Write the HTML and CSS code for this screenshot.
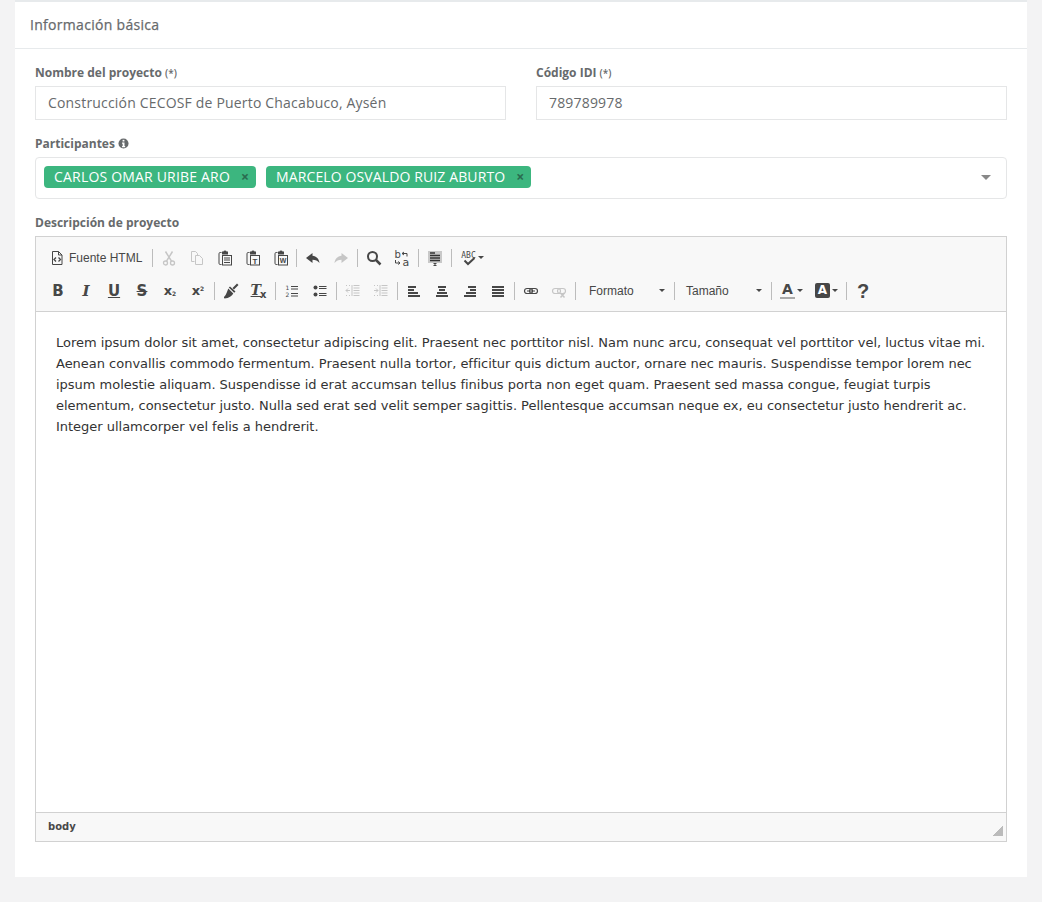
FILE: index.html
```html
<!DOCTYPE html>
<html lang="es">
<head>
<meta charset="utf-8">
<title>Información básica</title>
<link rel="stylesheet" href="styles.css">
</head>
<body>
<svg class="defs" width="0" height="0" aria-hidden="true">
  <symbol id="clip" viewBox="0 0 16 16"><path d="M4.500 2.500H3.200A1.200 1.200 0 0 0 2 3.700v9.600a1.200 1.200 0 0 0 1.200 1.200h1.300" fill="none" stroke="currentColor"/><path d="M5 1.500h1.500a1.500 1 0 0 1 3 0H11v3H5z" fill="currentColor"/><rect x="5.500" y="5.500" width="9" height="9.500" fill="none" stroke="currentColor"/></symbol>
</svg>
<main class="card">
  <h5 class="card-title">Información básica</h5>
  <form class="card-body">
    <div class="row">
      <div class="field">
        <label class="label">Nombre del proyecto <small>(*)</small></label>
        <input class="input" type="text" value="Construcción CECOSF de Puerto Chacabuco, Aysén">
      </div>
      <div class="field">
        <label class="label">Código IDI <small>(*)</small></label>
        <input class="input" type="text" value="789789978">
      </div>
    </div>
    <div class="block">
      <label class="label">Participantes
        <svg class="info" viewBox="0 0 12 12" width="11" height="11"><circle cx="6" cy="6" r="5.500" fill="currentColor"/><rect x="5" y="2" width="2" height="1.800" fill="#fff"/><path d="M4.400 5h2.700v3.600h.7V10H4.400V8.600h.7V6.400h-.7z" fill="#fff"/></svg>
      </label>
      <div class="select">
        <span class="tag">CARLOS OMAR URIBE ARO<span class="tag-x">×</span></span>
        <span class="tag">MARCELO OSVALDO RUIZ ABURTO<span class="tag-x">×</span></span>
        <span class="select-caret"></span>
      </div>
    </div>
    <div class="block">
      <label class="label">Descripción de proyecto</label>
      <div class="editor">
        <div class="toolbar">
          <div class="tb-row">
            <button type="button" class="btn btn-source">
              <svg viewBox="0 0 16 16" width="16" height="16"><path d="M3.500 1.500h6l3.500 3.500v9.500h-9.500z" fill="none" stroke="currentColor"/><path d="M9.500 1.500v3.500H13" fill="none" stroke="currentColor"/><path d="M7 7.500 5 9.500l2 2M9.500 7.500l2 2-2 2" fill="none" stroke="currentColor" stroke-width="1.300"/></svg>
              <span>Fuente HTML</span>
            </button>
            <i class="sep"></i>
            <button type="button" class="btn off"><svg viewBox="0 0 16 16" width="16" height="16"><circle cx="4.500" cy="13" r="2" fill="none" stroke="currentColor" stroke-width="1.300"/><circle cx="11.500" cy="13" r="2" fill="none" stroke="currentColor" stroke-width="1.300"/><path d="M5.500 11.200 11.500 1.500M10.500 11.200 4.500 1.500" stroke="currentColor" stroke-width="1.500"/></svg></button>
            <button type="button" class="btn off"><svg viewBox="0 0 16 16" width="16" height="16"><path d="M2.500 1.500h4l2 2v2M5.500 11.500h-3v-10M6.500 5.500h4l3 3v6h-7z" fill="none" stroke="currentColor"/></svg></button>
            <button type="button" class="btn"><svg viewBox="0 0 16 16" width="16" height="16"><use href="#clip"/><path d="M7 8h6M7 10h6M7 12.500h6" stroke="currentColor"/></svg></button>
            <button type="button" class="btn"><svg viewBox="0 0 16 16" width="16" height="16"><use href="#clip"/><text x="10" y="13.500" class="ic-mini">T</text></svg></button>
            <button type="button" class="btn"><svg viewBox="0 0 16 16" width="16" height="16"><use href="#clip"/><text x="10" y="13" class="ic-mini ic-w">W</text></svg></button>
            <i class="sep sep-tight"></i>
            <button type="button" class="btn"><svg viewBox="0 0 16 16" width="16" height="16"><path d="M7.500 3 1 8l6.500 5V9.800c3 0 5 .7 7 3.200-.4-4-3-7-7-7.300z" fill="currentColor"/></svg></button>
            <button type="button" class="btn off"><svg viewBox="0 0 16 16" width="16" height="16"><path d="M8.500 3 15 8l-6.500 5V9.800c-3 0-5 .7-7 3.200.4-4 3-7 7-7.300z" fill="currentColor"/></svg></button>
            <i class="sep"></i>
            <button type="button" class="btn"><svg viewBox="0 0 16 16" width="16" height="16"><circle cx="6.500" cy="6.500" r="4.500" fill="none" stroke="currentColor" stroke-width="2"/><path d="m10 10 4.500 4.500" stroke="currentColor" stroke-width="2.500"/></svg></button>
            <button type="button" class="btn"><svg viewBox="-1 -2 18 20" width="18" height="20"><text x="0.500" y="8" class="ic-ba">b</text><text x="8.500" y="15.500" class="ic-ba ic-a">a</text><path d="M8 3.500h5v3M8 3.500l2-1.500M8 3.500 10 5M1.500 10v3H6M6 13l-1.800-1.500M6 13l-1.800 1.500" fill="none" stroke="currentColor"/></svg></button>
            <i class="sep"></i>
            <button type="button" class="btn"><svg viewBox="0 0 16 16" width="16" height="16"><rect x="1" y="1" width="14" height="12" fill="#c8c8c8"/><path d="M3 3h5M3 5.500h10M3 8h10M3 10.500h10" stroke="#333" stroke-width="1.500"/><path d="M6.500 13.500h3M6.500 15.500h3M8 13.500v2" stroke="currentColor"/></svg></button>
            <i class="sep"></i>
            <button type="button" class="btn btn-spell"><svg viewBox="0 0 16 16" width="16" height="16"><text x="7.500" y="7.500" class="ic-abc">ABC</text><path d="m3.500 10.500 3.500 3.500L13.500 8" fill="none" stroke="currentColor" stroke-width="2"/></svg><i class="caret"></i></button>
          </div>
          <div class="tb-row">
            <button type="button" class="btn"><span class="ic-b">B</span></button>
            <button type="button" class="btn"><span class="ic-i">I</span></button>
            <button type="button" class="btn"><span class="ic-b ic-u">U</span></button>
            <button type="button" class="btn"><span class="ic-b ic-s">S</span></button>
            <button type="button" class="btn"><span class="ic-x">x<sub>2</sub></span></button>
            <button type="button" class="btn"><span class="ic-x">x<sup>2</sup></span></button>
            <i class="sep"></i>
            <button type="button" class="btn"><svg viewBox="0 0 16 16" width="16" height="16"><path d="M9.500 5 14 .5 15.500 2 11 6.500zM7 3.500l5.500 5-1.300 1.300-5.400-5.200zM5.300 5.600l5 4.800C9 13 6 15 1.500 15.500 1 15 .8 14.500 1 14c2.700-2.500 3-5.500 4.300-8.400z" fill="currentColor"/></svg></button>
            <button type="button" class="btn"><span class="ic-clear">T<b>x</b></span></button>
            <i class="sep"></i>
            <button type="button" class="btn"><svg viewBox="0 0 16 16" width="16" height="16"><text x="3.500" y="7" class="ic-num">1</text><text x="3.500" y="14" class="ic-num">2</text><path d="M7 3.500h7M7 6h7M7 10.500h7M7 13h7" stroke="currentColor"/></svg></button>
            <button type="button" class="btn"><svg viewBox="0 0 16 16" width="16" height="16"><circle cx="3.500" cy="4.500" r="2" fill="currentColor"/><circle cx="3.500" cy="11.500" r="2" fill="currentColor"/><path d="M7 3.500h7.500M7 5.500h7.500M7 10.500h7.500M7 12.500h7.500" stroke="currentColor"/></svg></button>
            <i class="sep"></i>
            <button type="button" class="btn off"><svg viewBox="0 0 16 16" width="16" height="16"><path d="M8.500 2.500h6M8.500 5h6M8.500 7.500h6M8.500 10h6M8.500 12.500h6M7 2v11" stroke="currentColor"/><path d="M5 7.500H1M3 5.500l-2 2 2 2M1 2.500h1M4 2.500h1M1 12.500h1M4 12.500h1" fill="none" stroke="currentColor"/></svg></button>
            <button type="button" class="btn off"><svg viewBox="0 0 16 16" width="16" height="16"><path d="M8.500 2.500h6M8.500 5h6M8.500 7.500h6M8.500 10h6M8.500 12.500h6M7 2v11" stroke="currentColor"/><path d="M1 7.500h4M3 5.500l2 2-2 2M1 2.500h1M4 2.500h1M1 12.500h1M4 12.500h1" fill="none" stroke="currentColor"/></svg></button>
            <i class="sep"></i>
            <button type="button" class="btn"><svg viewBox="0 0 16 16" width="16" height="16"><path d="M2 4h8M2 7h6M2 10h10M2 13h12" stroke="currentColor" stroke-width="2"/></svg></button>
            <button type="button" class="btn"><svg viewBox="0 0 16 16" width="16" height="16"><path d="M4 4h8M5 7h6M3 10h10M2 13h12" stroke="currentColor" stroke-width="2"/></svg></button>
            <button type="button" class="btn"><svg viewBox="0 0 16 16" width="16" height="16"><path d="M6 4h8M8 7h6M4 10h10M2 13h12" stroke="currentColor" stroke-width="2"/></svg></button>
            <button type="button" class="btn"><svg viewBox="0 0 16 16" width="16" height="16"><path d="M2 4h12M2 7h12M2 10h12M2 13h12" stroke="currentColor" stroke-width="2"/></svg></button>
            <i class="sep"></i>
            <button type="button" class="btn"><svg viewBox="0 0 16 16" width="16" height="16"><rect x="1.500" y="5.500" width="8" height="5" rx="2.500" fill="none" stroke="currentColor" stroke-width="1.200"/><rect x="6.500" y="5.500" width="8" height="5" rx="2.500" fill="none" stroke="currentColor" stroke-width="1.200"/><path d="M4 8h8" stroke="currentColor"/></svg></button>
            <button type="button" class="btn off"><svg viewBox="0 0 16 16" width="16" height="16"><rect x="1.500" y="5.500" width="8" height="5" rx="2.500" fill="none" stroke="currentColor" stroke-width="1.200"/><rect x="6.500" y="5.500" width="8" height="5" rx="2.500" fill="none" stroke="currentColor" stroke-width="1.200"/><path d="M9.500 10l4 4.500M13.500 10l-4 4.500" stroke="currentColor" stroke-width="1.500"/></svg></button>
            <i class="sep"></i>
            <button type="button" class="combo combo-format"><span>Formato</span><i class="caret"></i></button>
            <i class="sep"></i>
            <button type="button" class="combo combo-size"><span>Tamaño</span><i class="caret"></i></button>
            <i class="sep"></i>
            <button type="button" class="btn btn-color"><span class="ic-color">A</span><i class="caret"></i></button>
            <button type="button" class="btn btn-color"><span class="ic-bg">A</span><i class="caret"></i></button>
            <i class="sep"></i>
            <button type="button" class="btn"><span class="ic-help">?</span></button>
          </div>
        </div>
        <div class="content">
          <p>Lorem ipsum dolor sit amet, consectetur adipiscing elit. Praesent nec porttitor nisl. Nam nunc arcu, consequat vel porttitor vel, luctus vitae mi. Aenean convallis commodo fermentum. Praesent nulla tortor, efficitur quis dictum auctor, ornare nec mauris. Suspendisse tempor lorem nec ipsum molestie aliquam. Suspendisse id erat accumsan tellus finibus porta non eget quam. Praesent sed massa congue, feugiat turpis elementum, consectetur justo. Nulla sed erat sed velit semper sagittis. Pellentesque accumsan neque ex, eu consectetur justo hendrerit ac. Integer ullamcorper vel felis a hendrerit.</p>
        </div>
        <div class="statusbar">
          <span class="path">body</span>
          <i class="resizer"></i>
        </div>
      </div>
    </div>
  </form>
</main>
</body>
</html>
```
FILE: styles.css
```css
* { box-sizing: border-box; }
html, body { height: 100%; }
body {
  margin: 0;
  background: #f3f3f4;
  font-family: "Open Sans", "Liberation Sans", sans-serif;
  color: #676a6c;
  overflow: hidden;
}
.defs { position: absolute; }
.card {
  margin: 0 15px;
  height: 877px;
  background: #fff;
  border-top: 2px solid #e7eaec;
}
.card-title {
  margin: 0;
  height: 47px;
  padding: 14px 15px 0;
  font-size: 14px;
  line-height: 18px;
  font-weight: 400;
  letter-spacing: .3px;
  -webkit-text-stroke: .25px #676a6c;
  border-bottom: 1px solid #e7eaec;
}
.card-body {
  padding: 15px 20px 0;
}
.row {
  display: grid;
  grid-template-columns: 1fr 1fr;
  gap: 30px;
}
.label {
  display: block;
  height: 22px;
  font-size: 12px;
  line-height: 17px;
  font-weight: 700;
}
.label small { font-size: 10px; font-weight: 600; }
.input {
  display: block;
  width: 100%;
  height: 34px;
  padding: 4px 12px 6px;
  border: 1px solid #e5e6e7;
  font: 14px "Open Sans", sans-serif;
  letter-spacing: .18px;
  color: #676a6c;
  outline: 0;
  background: #fff;
}
.block { margin-top: 15px; }
.info { vertical-align: -1px; }
.select {
  position: relative;
  display: flex;
  gap: 10px;
  height: 42px;
  padding: 8px;
  border: 1px solid #e5e6e7;
  border-radius: 4px;
}
.tag {
  display: flex;
  align-items: center;
  height: 22px;
  padding: 0 6px 2px 10px;
  border-radius: 4px;
  background: #3cb67f;
  color: #fff;
  font-size: 14px;
  letter-spacing: .19px;
}
.tag + .tag { letter-spacing: .12px; }
.tag-x {
  margin-left: 10px;
  width: 10px;
  text-align: center;
  font-weight: 700;
  color: #2a6b4f;
}
.select-caret {
  position: absolute;
  right: 15px;
  top: 17px;
  border: 5px solid transparent;
  border-top: 5px solid #888;
  border-bottom: 0;
}
.editor {
  border: 1px solid #d1d1d1;
}
.toolbar {
  height: 75px;
  padding: 4px 8px 0;
  background: #f8f8f8;
  border-bottom: 1px solid #d1d1d1;
}
.tb-row {
  display: flex;
  align-items: center;
  height: 33px;
}
.btn, .combo {
  display: flex;
  align-items: center;
  justify-content: center;
  flex: none;
  height: 28px;
  padding: 0;
  border: 0;
  background: none;
  color: #474747;
  font: 12px/16px "Liberation Sans", Arial, sans-serif;
}
.btn { width: 28px; }
.off { color: #c6c6c6; }
.btn-source { width: 106px; gap: 4px; justify-content: flex-start; padding-left: 5px; }
.btn-spell { width: 35px; gap: 1px; padding-left: 1px; }
.btn-color { width: 35px; gap: 2px; }
.sep {
  flex: none;
  width: 1px;
  height: 18px;
  margin: 0 2px;
  background: #bcbcbc;
}
.sep-tight { margin-left: 1px; }
.caret {
  flex: none;
  width: 0;
  height: 0;
  border: 3px solid transparent;
  border-top: 3px solid #474747;
  border-bottom: 0;
}
.combo { width: 94px; justify-content: space-between; padding: 0 7px 0 11px; }
.combo-size { padding-left: 9px; width: 92px; }
.ic-b { font: 700 15px/16px "DejaVu Sans", sans-serif; }
.ic-u { text-decoration: underline; }
.ic-s { text-decoration: line-through; }
.ic-i { font: italic 700 15px/16px "DejaVu Serif", serif; }
.ic-x { font: 700 13px/16px "DejaVu Sans", sans-serif; }
.ic-x sub, .ic-x sup { font-size: 6px; line-height: 0; }
.ic-x sub { vertical-align: -1px; }
.ic-x sup { vertical-align: 4px; }
.ic-clear { font: italic 700 14px/16px "DejaVu Serif", serif; text-decoration: underline; margin-left: -1px; }
.ic-clear b { font: 700 10px/10px "DejaVu Sans", sans-serif; vertical-align: -3px; display: inline-block; margin-left: -1px; }
.ic-color { font: 700 14px/15px "DejaVu Sans", sans-serif; border-bottom: 2px solid #aaa; width: 15px; text-align: center; }
.ic-bg { font: 700 12px/15px "DejaVu Sans", sans-serif; background: #474747; color: #fff; width: 15px; height: 15px; border-radius: 2px; text-align: center; }
.ic-help { font: 700 20px/20px "Liberation Sans", sans-serif; }
.ic-mini { font: 700 8px "Liberation Sans", sans-serif; text-anchor: middle; fill: currentColor; }
.ic-w { font-size: 7px; }
.ic-ba { font: 10px "DejaVu Sans", sans-serif; fill: currentColor; }
.ic-a { font-size: 11px; }
.ic-abc { font: 8px "DejaVu Sans Mono", monospace; text-anchor: middle; fill: currentColor; }
.ic-num { font: 6px "DejaVu Sans", sans-serif; fill: currentColor; text-anchor: middle; }
.content {
  height: 500px;
  padding: 20px;
  background: #fff;
  font: 13px/21px "DejaVu Sans", Verdana, sans-serif;
  letter-spacing: -.02px;
  color: #333;
}
.content p { margin: 0; }
.statusbar {
  position: relative;
  height: 29px;
  padding: 0 12px;
  background: #f8f8f8;
  border-top: 1px solid #d1d1d1;
  font: 700 10px/27px "DejaVu Sans", sans-serif;
  color: #484848;
}
.resizer {
  position: absolute;
  right: 3px;
  bottom: 5px;
  width: 10px;
  height: 10px;
  background: linear-gradient(135deg, transparent 50%, #bbb 50%);
}
```
